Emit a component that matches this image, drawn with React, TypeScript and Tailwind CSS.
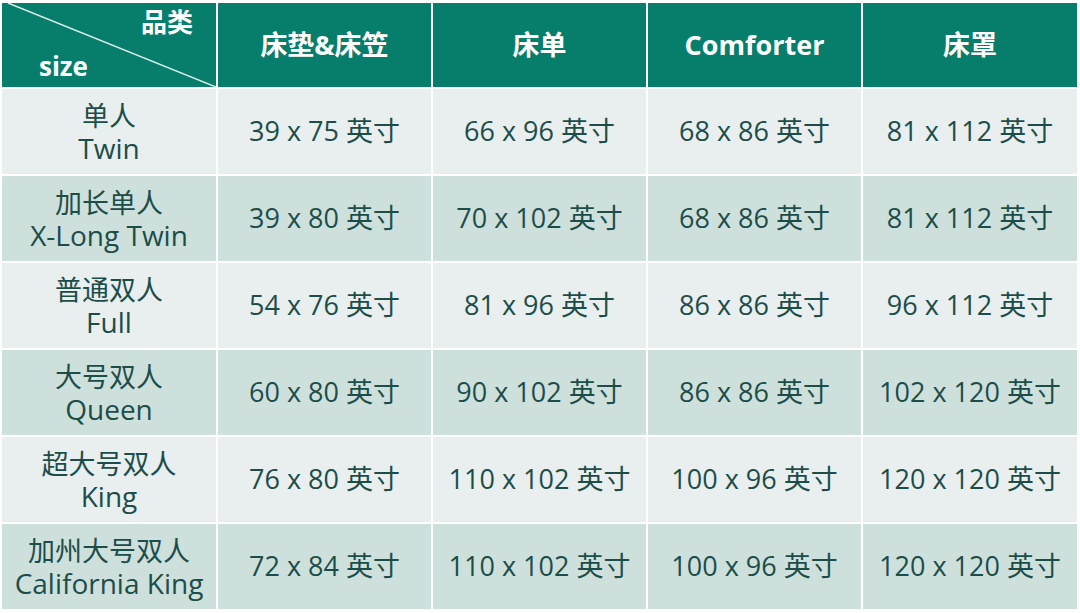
import React from "react";

const headers = ["床垫&床笠", "床单", "Comforter", "床罩"];
const rows: { cn: string; en: string; v: string[] }[] = [
  { cn: "单人", en: "Twin", v: ["39 x 75 英寸", "66 x 96 英寸", "68 x 86 英寸", "81 x 112 英寸"] },
  { cn: "加长单人", en: "X-Long Twin", v: ["39 x 80 英寸", "70 x 102 英寸", "68 x 86 英寸", "81 x 112 英寸"] },
  { cn: "普通双人", en: "Full", v: ["54 x 76 英寸", "81 x 96 英寸", "86 x 86 英寸", "96 x 112 英寸"] },
  { cn: "大号双人", en: "Queen", v: ["60 x 80 英寸", "90 x 102 英寸", "86 x 86 英寸", "102 x 120 英寸"] },
  { cn: "超大号双人", en: "King", v: ["76 x 80 英寸", "110 x 102 英寸", "100 x 96 英寸", "120 x 120 英寸"] },
  { cn: "加州大号双人", en: "California King", v: ["72 x 84 英寸", "110 x 102 英寸", "100 x 96 英寸", "120 x 120 英寸"] },
];

const font = { fontFamily: '"Open Sans", "Noto Sans CJK SC", sans-serif' };

export default function App() {
  return (
    <div className="w-[1080px] h-[613px] bg-white pt-[3px] pl-[2px]" style={font}>
      <div className="grid grid-cols-[214px_213px_213px_213px_214px] grid-rows-[84px_repeat(6,85px)] gap-[2px] w-[1075px]">
        <div className="relative bg-[#077d6b] text-white font-bold">
          <svg className="absolute inset-0" width="214" height="84" viewBox="0 0 214 84">
            <line x1="6" y1="0" x2="214" y2="84" stroke="#d9f0ea" strokeWidth="1.5" />
          </svg>
          <span className="absolute left-[139px] top-[6px] text-[26px] leading-none">品类</span>
          <span className="absolute left-[37px] top-[50px] text-[26px] leading-none">size</span>
        </div>
        {headers.map((h) => (
          <div key={h} className="bg-[#077d6b] text-white font-bold text-[27px] flex items-center justify-center">
            {h}
          </div>
        ))}
        {rows.map((r, i) => {
          const bg = i % 2 === 0 ? "bg-[#e8efee]" : "bg-[#cde0dc]";
          return (
            <React.Fragment key={r.en}>
              <div className={`${bg} text-[#1d4d49] flex flex-col items-center justify-center`}>
                <span className="text-[27px] leading-[32px]">{r.cn}</span>
                <span className="text-[28px] leading-[32px]">{r.en}</span>
              </div>
              {r.v.map((v, j) => (
                <div key={j} className={`${bg} text-[#1d4d49] text-[27px] flex items-center justify-center`}>
                  {v}
                </div>
              ))}
            </React.Fragment>
          );
        })}
      </div>
    </div>
  );
}
